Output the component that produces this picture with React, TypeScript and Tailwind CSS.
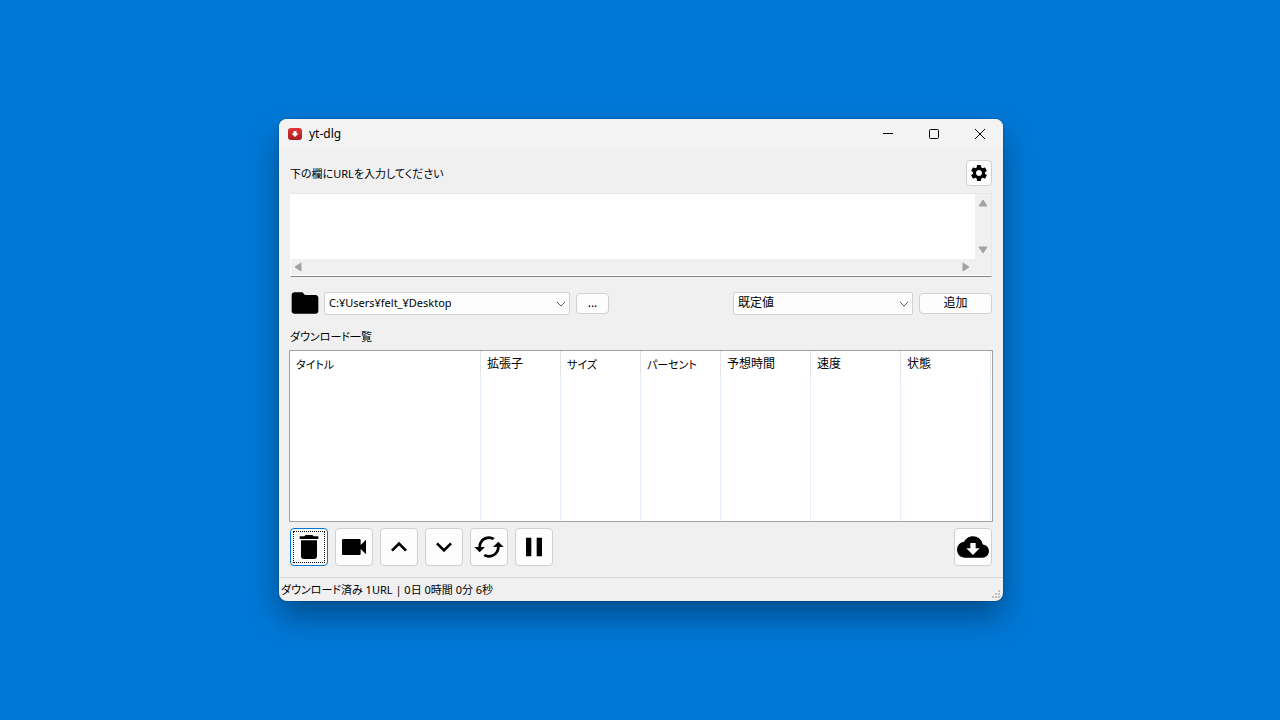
import type { ReactNode } from 'react';
import { MdDelete, MdVideocam, MdKeyboardArrowUp, MdKeyboardArrowDown, MdPause, MdSettings, MdFolder, MdCloudDownload, MdLoop } from 'react-icons/md';

const columns = [
  { label: 'タイトル', kana: true, width: 'w-[191px]' },
  { label: '拡張子', kana: false, width: 'w-[80px]' },
  { label: 'サイズ', kana: true, width: 'w-[80px]' },
  { label: 'パーセント', kana: true, width: 'w-[80px]' },
  { label: '予想時間', kana: false, width: 'w-[90px]' },
  { label: '速度', kana: false, width: 'w-[90px]' },
  { label: '状態', kana: false, width: 'w-[90px]' },
];

const kanaText = 'pt-[2px] text-[11px] [font-feature-settings:"palt"]';

function AppIcon() {
  return (
    <svg width="14" height="14" viewBox="0 0 14 14">
      <defs>
        <linearGradient id="badge" x1="0" y1="0" x2="0" y2="1">
          <stop offset="0" stopColor="#e0343a" />
          <stop offset="1" stopColor="#a81c22" />
        </linearGradient>
      </defs>
      <rect y="1" width="14" height="12" rx="3" fill="url(#badge)" />
      <path d="M5.5 4h3v2.5h2L7 10 3.5 6.500h2z" fill="#fff" />
    </svg>
  );
}

function Arrow({ label, points }: { label: string; points: string }) {
  return (
    <button aria-label={label} className="flex size-4 items-center justify-center">
      <svg width="10" height="10" viewBox="0 0 10 10">
        <polygon points={points} fill="#a3a3a3" stroke="#a3a3a3" strokeLinejoin="round" />
      </svg>
    </button>
  );
}

function Dropdown({ label, value, className }: { label: string; value: string; className: string }) {
  return (
    <div className={`relative ${className}`}>
      <select aria-label={label} className="h-[23px] w-full appearance-none rounded-[2px] border border-[#d0d0d0] bg-[#fdfdfd] pl-1 pr-5 leading-5">
        <option>{value}</option>
      </select>
      <svg className="pointer-events-none absolute right-1 top-2" width="10" height="8" viewBox="0 0 10 8" fill="none" stroke="#5c5c5c">
        <path d="M1 2l4 4 4-4" />
      </svg>
    </div>
  );
}

function ToolButton({ label, focused, children }: { label: string; focused?: boolean; children: ReactNode }) {
  return (
    <button
      aria-label={label}
      className={`flex size-[38px] items-center justify-center rounded-[4px] border bg-[#fdfdfd] p-[2px] ${focused ? 'border-[#0078d4]' : 'border-[#d0d0d0]'}`}
    >
      <span className={`flex size-full items-center justify-center ${focused ? 'border border-dotted border-black' : ''}`}>{children}</span>
    </button>
  );
}

export default function App() {
  return (
    <div className="flex min-h-screen items-center justify-center bg-[#0078d7] pl-0.5 font-['Noto_Sans','Noto_Sans_CJK_JP',sans-serif] text-xs text-black">
      <main className="w-full max-w-[724px] overflow-hidden rounded-lg bg-[#f0f0f0] shadow-[0_16px_32px_rgba(0,0,0,0.35),0_0_2px_rgba(0,0,0,0.4)]">
        {/* Title bar */}
        <header className="flex h-[30px] items-center bg-[#f3f3f3] pl-[9px]">
          <AppIcon />
          <h1 className="ml-[7px] flex-1">yt-dlg</h1>
          <button aria-label="最小化" className="flex h-full w-[46px] items-center justify-center">
            <svg width="10" height="10" viewBox="0 0 10 10" stroke="#000"><path d="M0 4.5h10" /></svg>
          </button>
          <button aria-label="最大化" className="flex h-full w-[46px] items-center justify-center">
            <svg width="10" height="10" viewBox="0 0 10 10" stroke="#000" fill="none"><rect x=".5" y=".5" width="9" height="9" rx="1" /></svg>
          </button>
          <button aria-label="閉じる" className="flex h-full w-[46px] items-center justify-center">
            <svg width="10" height="10" viewBox="0 0 10 10" stroke="#000"><path d="M0 0l10 10M10 0L0 10" /></svg>
          </button>
        </header>

        <div className="p-[11px]">
          <div className="flex h-[26px] items-center justify-between">
            <label htmlFor="urls" className={kanaText}>下の欄にURLを入力してください</label>
            <button aria-label="設定" className="flex size-[26px] items-center justify-center rounded-[4px] border border-[#d0d0d0] bg-[#fdfdfd]">
              <MdSettings size={20} />
            </button>
          </div>

          {/* URL box with its scroll bars */}
          <div className="mt-[7px] border border-[#e8e8e8] border-b-[#868686] border-l-white bg-white pb-px">
            <div className="flex">
              <textarea id="urls" className="h-[65px] flex-1 resize-none bg-white outline-none" />
              <div className="flex w-4 flex-col justify-between bg-[#f0f0f0] py-px">
                <Arrow label="上へスクロール" points="5,2 9,8 1,8" />
                <Arrow label="下へスクロール" points="1,2 9,2 5,8" />
              </div>
            </div>
            <div className="flex justify-between bg-[#f0f0f0] pr-4">
              <Arrow label="左へスクロール" points="7,1 7,9 1,5" />
              <Arrow label="右へスクロール" points="1,1 7,5 1,9" />
            </div>
          </div>

          <div className="mt-[14px] flex h-[24px] items-center">
            <MdFolder size={32} className="-ml-px shrink-0" />
            <Dropdown label="保存先" value="C:¥Users¥felt_¥Desktop" className="ml-[3px] w-[246px] text-[11px]" />
            <button aria-label="参照" className="ml-[6px] h-[21px] w-[33px] rounded-[4px] border border-[#d0d0d0] bg-[#fdfdfd] leading-4">...</button>
            <div className="flex-1" />
            <Dropdown label="形式" value="既定値" className="w-[180px]" />
            <button className="ml-[6px] h-[21px] w-[73px] rounded-[4px] border border-[#d0d0d0] bg-[#fdfdfd] leading-4">追加</button>
          </div>

          <h2 id="list" className={`mt-[12px] leading-4 ${kanaText}`}>ダウンロード一覧</h2>

          <div className="-mx-px mt-[5px] border border-[#a0a0a0] bg-white">
            <table aria-labelledby="list" className="w-full table-fixed border-separate border-spacing-0">
              <thead>
                <tr>
                  {columns.map((c) => (
                    <th key={c.label} className={`h-[26px] border-r border-[#e5e5e5] px-[6px] text-left font-normal ${c.width} ${c.kana ? kanaText : ''}`}>
                      {c.label}
                    </th>
                  ))}
                  <th />
                </tr>
              </thead>
              <tbody>
                <tr>
                  {columns.map((c) => (
                    <td key={c.label} className="h-[144px] border-r border-[#e6f0fc]" />
                  ))}
                  <td />
                </tr>
              </tbody>
            </table>
          </div>

          <div className="mt-[6px] flex gap-[7px]">
            <ToolButton label="削除" focused><MdDelete size={32} className="shrink-0" /></ToolButton>
            <ToolButton label="再生"><MdVideocam size={32} /></ToolButton>
            <ToolButton label="上へ"><MdKeyboardArrowUp size={32} /></ToolButton>
            <ToolButton label="下へ"><MdKeyboardArrowDown size={32} /></ToolButton>
            <ToolButton label="再読み込み"><MdLoop size={32} className="-rotate-90" /></ToolButton>
            <ToolButton label="一時停止"><MdPause size={32} /></ToolButton>
            <div className="flex-1" />
            <ToolButton label="ダウンロード開始"><MdCloudDownload size={32} /></ToolButton>
          </div>
        </div>

        <footer className="flex h-[24px] items-center justify-between border-t border-[#d7d7d7] pl-[2px]">
          <span className={kanaText}>ダウンロード済み 1URL | 0日 0時間 0分 6秒</span>
          <svg className="self-end" width="12" height="12" viewBox="0 0 12 12" fill="#bfbfbf">
            <path d="M7 1h2v2H7zM4 4h2v2H4zM7 4h2v2H7zM1 7h2v2H1zM4 7h2v2H4zM7 7h2v2H7z" />
          </svg>
        </footer>
      </main>
    </div>
  );
}
